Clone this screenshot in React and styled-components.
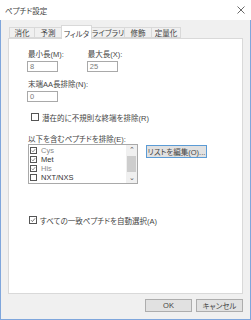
import React from "react";
import styled, { createGlobalStyle } from "styled-components";

const GlobalStyle = createGlobalStyle`
  body {
    margin: 0;
    background: #ffffff;
  }
  * {
    box-sizing: border-box;
  }
`;

const tabs = [
  { label: "消化", width: 26 },
  { label: "予測", width: 28 },
  { label: "フィルタ", width: 31, active: true },
  { label: "ライブラリ", width: 34 },
  { label: "修飾", width: 28 },
  { label: "定量化", width: 30 },
];

const items = [
  { name: "Cys", checked: true, dim: true },
  { name: "Met", checked: true },
  { name: "His", checked: true, dim: true },
  { name: "NXT/NXS", checked: false },
];

function Check({ checked, small }) {
  return (
    <CheckBox $small={small}>
      {checked && (
        <svg width="100%" height="100%" viewBox="0 0 8 8">
          <path d="M1.3 4.2 L3.2 6.1 L6.8 1.8" fill="none" stroke="#333" strokeWidth="0.9" />
        </svg>
      )}
    </CheckBox>
  );
}

function App() {
  return (
    <Window>
      <GlobalStyle />
      <TitleBar>
        <Title>ペプチド設定</Title>
        <svg width="8" height="8" viewBox="0 0 8 8">
          <path d="M0.5 0.5 L7.5 7.5 M7.5 0.5 L0.5 7.5" stroke="#444" strokeWidth="0.8" />
        </svg>
      </TitleBar>
      <Body>
        <TabRow>
          {tabs.map((t) => (
            <Tab key={t.label} $active={t.active} $w={t.width}>
              {t.label}
            </Tab>
          ))}
        </TabRow>
        <Panel>
          <Fields>
            <Field>
              <Label>最小長(M):</Label>
              <Input>8</Input>
            </Field>
            <Field>
              <Label>最大長(X):</Label>
              <Input>25</Input>
            </Field>
          </Fields>
          <Field $top={8}>
            <Label>末端AA長排除(N):</Label>
            <Input>0</Input>
          </Field>
          <CheckRow $top={10} $indent={3}>
            <Check />
            <span>潜在的に不規則な終端を排除(R)</span>
          </CheckRow>
          <ListLabel>以下を含むペプチドを排除(E):</ListLabel>
          <ListRow>
            <ListBox>
              <Items>
                {items.map((it) => (
                  <Item key={it.name} $dim={it.dim}>
                    <Check checked={it.checked} small />
                    <span>{it.name}</span>
                  </Item>
                ))}
              </Items>
              <ScrollBar>
                <Arrow>⌃</Arrow>
                <Thumb />
                <Arrow>⌄</Arrow>
              </ScrollBar>
            </ListBox>
            <EditButton>リストを編集(O)...</EditButton>
          </ListRow>
          <CheckRow $top={31} $indent={1}>
            <Check checked />
            <span>すべての一致ペプチドを自動選択(A)</span>
          </CheckRow>
        </Panel>
        <Buttons>
          <Button>OK</Button>
          <Button>キャンセル</Button>
        </Buttons>
      </Body>
    </Window>
  );
}

export default App;

const Window = styled.div`
  width: 251px;
  height: 320px;
  display: flex;
  flex-direction: column;
  font-family: "Liberation Sans", "Noto Sans CJK JP", sans-serif;
  font-feature-settings: "palt";
  font-size: 7.5px;
  color: #333;
`;

const TitleBar = styled.div`
  height: 20px;
  flex: none;
  background: #ffffff;
  display: flex;
  align-items: center;
  justify-content: space-between;
  padding: 0 6px 0 5px;
`;

const Title = styled.div`
  font-size: 7.5px;
  color: #444;
`;

const Body = styled.div`
  flex: 1;
  display: flex;
  flex-direction: column;
  background: #f0f0f0;
  border: 1px solid #7fa6dc;
  border-top: none;
  padding: 5px 7px 7px 7px;
`;

const TabRow = styled.div`
  display: flex;
  align-items: flex-end;
  height: 13px;
  padding-left: 2px;
  position: relative;
  z-index: 1;
`;

const Tab = styled.div`
  width: ${(p) => p.$w}px;
  height: ${(p) => (p.$active ? "14px" : "11px")};
  margin-bottom: ${(p) => (p.$active ? "-1px" : "0")};
  margin-left: -1px;
  padding-top: ${(p) => (p.$active ? "1px" : "0")};
  display: flex;
  align-items: center;
  justify-content: center;
  background: ${(p) => (p.$active ? "#ffffff" : "#f0f0f0")};
  border: 1px solid #d9d9d9;
  border-bottom: ${(p) => (p.$active ? "none" : "1px solid #d9d9d9")};
  color: #444;
  white-space: nowrap;
`;

const Panel = styled.div`
  height: 256px;
  flex: none;
  background: #ffffff;
  border: 1px solid #d9d9d9;
  padding: 11px 18px 0 19px;
  display: flex;
  flex-direction: column;
  align-items: flex-start;
`;

const Fields = styled.div`
  display: flex;
  gap: 24px;
`;

const Field = styled.div`
  display: flex;
  flex-direction: column;
  gap: 1px;
  margin-top: ${(p) => p.$top || 0}px;
`;

const Label = styled.div`
  line-height: 10px;
  color: #444;
  white-space: nowrap;
`;

const Input = styled.div`
  width: 31px;
  height: 11px;
  margin-left: -1px;
  border: 1px solid #a9a9a9;
  background: #ffffff;
  color: #7a7a7a;
  line-height: 9px;
  padding-left: 2px;
`;

const CheckRow = styled.div`
  display: flex;
  align-items: center;
  gap: 3px;
  height: 10px;
  margin-top: ${(p) => p.$top}px;
  margin-left: ${(p) => p.$indent}px;
  color: #444;
  white-space: nowrap;
`;

const CheckBox = styled.div`
  width: ${(p) => (p.$small ? "7px" : "8px")};
  height: ${(p) => (p.$small ? "7px" : "8px")};
  border: 1px solid #555;
  background: #ffffff;
  flex: none;
  display: flex;
`;

const ListLabel = styled.div`
  line-height: 9px;
  margin-top: 13px;
  color: #444;
`;

const ListRow = styled.div`
  display: flex;
  align-items: flex-start;
  gap: 8px;
`;

const ListBox = styled.div`
  width: 110px;
  height: 40px;
  border: 1px solid #a9a9a9;
  background: #ffffff;
  display: flex;
`;

const Items = styled.div`
  flex: 1;
  padding: 1px 0 0 1px;
`;

const Item = styled.div`
  height: 9px;
  display: flex;
  align-items: center;
  gap: 4px;
  color: ${(p) => (p.$dim ? "#8a8a8a" : "#333")};
`;

const ScrollBar = styled.div`
  width: 11px;
  background: #f0f0f0;
  display: flex;
  flex-direction: column;
  align-items: center;
`;

const Arrow = styled.div`
  height: 10px;
  line-height: 10px;
  font-size: 7px;
  color: #555;
`;

const Thumb = styled.div`
  width: 9px;
  flex: 1;
  margin: 1px 0;
  background: #cdcdcd;
`;

const EditButton = styled.div`
  margin-top: 1px;
  width: 61px;
  height: 13px;
  border: 1px solid #5b9bd5;
  background: #e1e1e1;
  display: flex;
  align-items: center;
  justify-content: center;
  color: #444;
  white-space: nowrap;
`;

const Buttons = styled.div`
  display: flex;
  justify-content: flex-end;
  gap: 4px;
  margin-top: 5px;
`;

const Button = styled.div`
  width: 47px;
  height: 13px;
  border: 1px solid #adadad;
  background: #e1e1e1;
  display: flex;
  align-items: center;
  justify-content: center;
  color: #444;
`;
